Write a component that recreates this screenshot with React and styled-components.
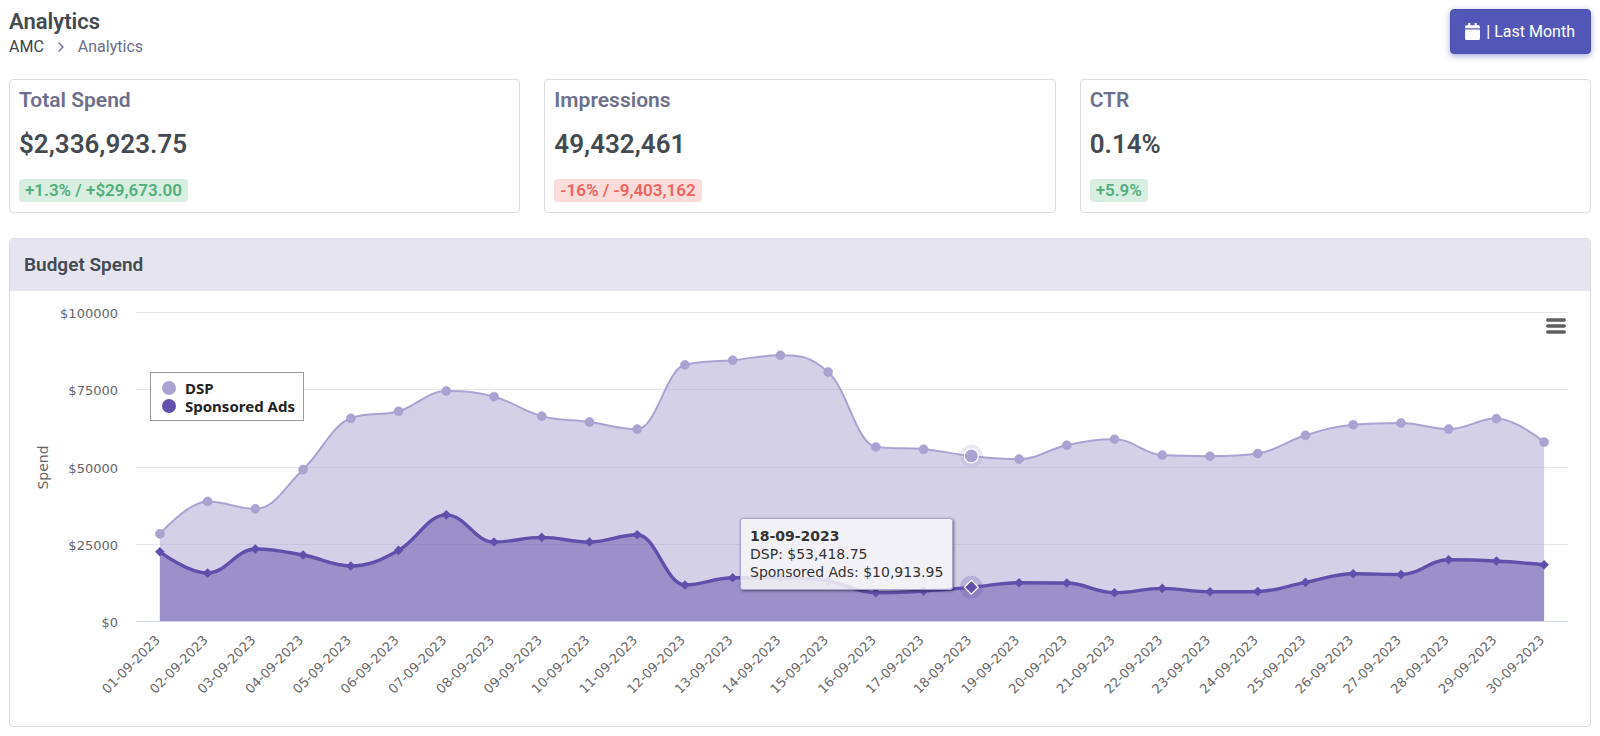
import { useLayoutEffect, useRef, useState } from "react";
import styled, { createGlobalStyle } from "styled-components";
import { ChevronRight } from "lucide-react";
import { FaCalendar } from "react-icons/fa";

const stats = [
  { title: "Total Spend", value: "$2,336,923.75", change: "+1.3% / +$29,673.00", up: true },
  { title: "Impressions", value: "49,432,461", change: "-16% / -9,403,162", up: false },
  { title: "CTR", value: "0.14%", change: "+5.9%", up: true },
];

const dsp = [
  28200, 38700, 36300, 49000, 65600, 67900, 74450, 72600, 66300, 64400,
  62100, 82900, 84400, 86000, 80600, 56350, 55600, 53418.75, 52400, 56900,
  58850, 53700, 53350, 54200, 60100, 63550, 64100, 62100, 65500, 57900,
];

const sponsored = [
  22400, 15500, 23300, 21350, 17800, 22850, 34350, 25550, 27050, 25550,
  27900, 11650, 14000, 14000, 12950, 9150, 9700, 10913.95, 12400, 12300,
  9150, 10550, 9450, 9550, 12500, 15300, 15050, 19800, 19400, 18200,
];

const days = dsp.map((_, i) => `${String(i + 1).padStart(2, "0")}-09-2023`);
const ticks = [0, 25000, 50000, 75000, 100000];
const hovered = 17;

const DSP_COLOR = "#aaa2d1";
const ADS_COLOR = "#6150ab";

const CHART_HEIGHT = 435;
const plot = { left: 126, right: 22, top: 21, bottom: 330 };

const money = (n) =>
  `$${n.toLocaleString("en-US", { minimumFractionDigits: 2 })}`;

const yOf = (value) =>
  plot.bottom - (value / 100000) * (plot.bottom - plot.top);

// Spline through the points, control points flattened at local extremes
function spline(points) {
  const s = 1.5;
  let d = `M ${points[0].x} ${points[0].y}`;
  let prevRight = null;
  for (let i = 1; i < points.length; i++) {
    const last = points[i - 1];
    const p = points[i];
    const next = points[i + 1];
    let left = { x: p.x, y: p.y };
    let right = null;
    if (next) {
      left = { x: (s * p.x + last.x) / (s + 1), y: (s * p.y + last.y) / (s + 1) };
      right = { x: (s * p.x + next.x) / (s + 1), y: (s * p.y + next.y) / (s + 1) };
      const correction =
        ((right.y - left.y) * (right.x - p.x)) / (right.x - left.x) + p.y - right.y;
      left.y += correction;
      right.y += correction;
      if (left.y > last.y && left.y > p.y) {
        left.y = Math.max(last.y, p.y);
        right.y = 2 * p.y - left.y;
      } else if (left.y < last.y && left.y < p.y) {
        left.y = Math.min(last.y, p.y);
        right.y = 2 * p.y - left.y;
      }
      if (right.y > next.y && right.y > p.y) {
        right.y = Math.max(next.y, p.y);
        left.y = 2 * p.y - right.y;
      } else if (right.y < next.y && right.y < p.y) {
        right.y = Math.min(next.y, p.y);
        left.y = 2 * p.y - right.y;
      }
    }
    const c1 = prevRight || last;
    d += ` C ${c1.x} ${c1.y} ${left.x} ${left.y} ${p.x} ${p.y}`;
    prevRight = right;
  }
  return d;
}

const diamond = (x, y, r) =>
  `M ${x} ${y - r} L ${x + r} ${y} L ${x} ${y + r} L ${x - r} ${y} Z`;

function Series({ points, color, width, children }) {
  const line = spline(points);
  const first = points[0];
  const last = points[points.length - 1];
  return (
    <g>
      <path
        d={`${line} L ${last.x} ${plot.bottom} L ${first.x} ${plot.bottom} Z`}
        fill={color}
        fillOpacity="0.5"
      />
      <path d={line} fill="none" stroke={color} strokeWidth={width} strokeLinejoin="round" />
      {children}
    </g>
  );
}

function BudgetChart() {
  const ref = useRef(null);
  const [width, setWidth] = useState(1200);

  useLayoutEffect(() => {
    const measure = () => setWidth(ref.current.clientWidth);
    measure();
    const observer = new ResizeObserver(measure);
    observer.observe(ref.current);
    return () => observer.disconnect();
  }, []);

  const plotRight = width - plot.right;
  const step = (plotRight - plot.left) / days.length;
  const xOf = (i) => plot.left + step * (i + 0.5);
  const dspPoints = dsp.map((v, i) => ({ x: xOf(i), y: yOf(v) }));
  const adsPoints = sponsored.map((v, i) => ({ x: xOf(i), y: yOf(v) }));
  const dspHover = dspPoints[hovered];
  const adsHover = adsPoints[hovered];

  return (
    <ChartArea ref={ref}>
      <ChartSvg width={width} height={CHART_HEIGHT} role="img" aria-label="Budget Spend">
        {ticks.map((tick) => (
          <g key={tick}>
            <GridLine
              x1={plot.left}
              x2={plotRight}
              y1={Math.round(yOf(tick)) + 0.5}
              y2={Math.round(yOf(tick)) + 0.5}
              $axis={tick === 0}
            />
            <AxisText x={plot.left - 18} y={yOf(tick) + 6} textAnchor="end">
              ${tick}
            </AxisText>
          </g>
        ))}
        <AxisTitle
          transform={`translate(38 ${(plot.top + plot.bottom) / 2 + 1}) rotate(-90)`}
          textAnchor="middle"
        >
          Spend
        </AxisTitle>
        {days.map((day, i) => (
          <AxisText
            key={day}
            transform={`translate(${xOf(i) + 1} ${plot.bottom + 20}) rotate(-45)`}
            textAnchor="end"
          >
            {day}
          </AxisText>
        ))}
        <Series points={dspPoints} color={DSP_COLOR} width={2}>
          {dspPoints.map((p, i) => (
            <circle key={i} cx={p.x} cy={p.y} r="4.5" fill={DSP_COLOR} stroke="#a098cb" strokeWidth="0.5" />
          ))}
        </Series>
        <Series points={adsPoints} color={ADS_COLOR} width={3.4}>
          {adsPoints.map((p, i) => (
            <path key={i} d={diamond(p.x, p.y, 4.8)} fill={ADS_COLOR} />
          ))}
        </Series>
        <circle cx={dspHover.x} cy={dspHover.y} r="11.5" fill={DSP_COLOR} fillOpacity="0.25" />
        <circle cx={dspHover.x} cy={dspHover.y} r="7" fill={DSP_COLOR} stroke="#fff" strokeWidth="1.2" />
        <circle cx={adsHover.x} cy={adsHover.y} r="11.5" fill={ADS_COLOR} fillOpacity="0.25" />
        <path d={diamond(adsHover.x, adsHover.y, 7)} fill={ADS_COLOR} stroke="#fff" strokeWidth="1.2" />
      </ChartSvg>

      <Legend>
        <LegendItem type="button">
          <Dot $color={DSP_COLOR} />
          DSP
        </LegendItem>
        <LegendItem type="button">
          <Dot $color={ADS_COLOR} />
          Sponsored Ads
        </LegendItem>
      </Legend>

      <MenuButton type="button" aria-label="View chart menu">
        <svg width="22" height="18" viewBox="0 0 22 18">
          <path
            d="M 2.7 3 H 19.3 M 2.7 9 H 19.3 M 2.7 15 H 19.3"
            stroke="#5f5f61"
            strokeWidth="3.4"
            strokeLinecap="round"
          />
        </svg>
      </MenuButton>

      <Tooltip style={{ right: width - adsHover.x + 18, top: adsHover.y - 69 }}>
        <strong>{days[hovered]}</strong>
        <span>DSP: {money(dsp[hovered])}</span>
        <span>Sponsored Ads: {money(sponsored[hovered])}</span>
      </Tooltip>
    </ChartArea>
  );
}

export default function App() {
  return (
    <Page>
      <GlobalStyle />
      <PageHeader>
        <div>
          <PageTitle>Analytics</PageTitle>
          <Breadcrumb aria-label="Breadcrumb">
            <CrumbLink href="#amc">AMC</CrumbLink>
            <ChevronRight size={16} />
            <span>Analytics</span>
          </Breadcrumb>
        </div>
        <RangeButton type="button">
          <FaCalendar size={17} />
          <span>| Last Month</span>
        </RangeButton>
      </PageHeader>

      <StatGrid>
        {stats.map((stat) => (
          <StatCard key={stat.title}>
            <StatTitle>{stat.title}</StatTitle>
            <StatValue>{stat.value}</StatValue>
            <Badge $up={stat.up}>{stat.change}</Badge>
          </StatCard>
        ))}
      </StatGrid>

      <Panel>
        <PanelTitle>Budget Spend</PanelTitle>
        <BudgetChart />
      </Panel>
    </Page>
  );
}

const GlobalStyle = createGlobalStyle`
  * {
    box-sizing: border-box;
  }

  body {
    margin: 0;
    background: #fff;
    color: #434a51;
    font-family: Roboto, "Liberation Sans", sans-serif;
  }

  button {
    font-family: inherit;
    cursor: pointer;
  }
`;

const Page = styled.main`
  padding: 9px;
`;

const PageHeader = styled.header`
  display: flex;
  justify-content: space-between;
  align-items: flex-start;
  margin-bottom: 20px;
`;

const PageTitle = styled.h1`
  margin: 0;
  font-size: 22px;
  font-weight: 600;
  line-height: 26px;
`;

const Breadcrumb = styled.nav`
  display: flex;
  align-items: center;
  gap: 9px;
  font-size: 16px;
  line-height: 24px;
  color: #6d708b;
`;

const CrumbLink = styled.a`
  color: #3d4349;
  text-decoration: none;
`;

const RangeButton = styled.button`
  display: flex;
  align-items: center;
  gap: 5px;
  height: 45px;
  padding: 0 15px 0 13px;
  border: 1px solid #4b50b3;
  border-radius: 4px;
  background: #5257b7;
  box-shadow: 0 2px 6px rgba(81, 86, 190, 0.5);
  color: #fff;
  font-size: 16px;
`;

const StatGrid = styled.section`
  display: grid;
  grid-template-columns: repeat(3, 1fr);
  gap: 24px;
  margin-bottom: 25px;
`;

const StatCard = styled.article`
  display: flex;
  flex-direction: column;
  align-items: flex-start;
  padding: 8px 9px 10px;
  border: 1px solid #dcdde1;
  border-radius: 4px;
`;

const StatTitle = styled.h2`
  margin: 0 0 16px;
  font-size: 21px;
  font-weight: 600;
  line-height: 24px;
  color: #6d708b;
`;

const StatValue = styled.div`
  margin-bottom: 19px;
  font-size: 26px;
  font-weight: 600;
  line-height: 32px;
`;

const Badge = styled.span`
  padding: 0 6px;
  border-radius: 4px;
  font-size: 17px;
  font-weight: 600;
  line-height: 23px;
  color: ${({ $up }) => ($up ? "#52ae7c" : "#f1635d")};
  background: ${({ $up }) => ($up ? "#d8eee1" : "#fbdcda")};
`;

const Panel = styled.section`
  border: 1px solid #dcdde1;
  border-radius: 4px;
`;

const PanelTitle = styled.h2`
  margin: 0;
  padding: 15px 14px;
  background: #e6e5ef;
  font-size: 19px;
  font-weight: 600;
  line-height: 22px;
`;

const ChartArea = styled.div`
  position: relative;
  font-family: "DejaVu Sans", sans-serif;
`;

const ChartSvg = styled.svg`
  display: block;
`;

const GridLine = styled.line`
  stroke: ${({ $axis }) => ($axis ? "#ccd6eb" : "#e6e6e8")};
  stroke-width: 1;
`;

const AxisText = styled.text`
  font-size: 13px;
  fill: #666;
`;

const AxisTitle = styled.text`
  font-size: 14px;
  fill: #666;
`;

const Legend = styled.div`
  position: absolute;
  top: 81px;
  left: 140px;
  display: flex;
  flex-direction: column;
  padding: 6px 8px 5px 11px;
  border: 1px solid #999;
  background: #fff;
  font-family: "Noto Sans", sans-serif;
`;

const LegendItem = styled.button`
  display: flex;
  align-items: center;
  gap: 9px;
  padding: 0;
  border: 0;
  background: none;
  color: #222;
  font-size: 15px;
  font-weight: 700;
  line-height: 18px;
`;

const Dot = styled.span`
  width: 14px;
  height: 14px;
  border-radius: 50%;
  background: ${({ $color }) => $color};
`;

const MenuButton = styled.button`
  position: absolute;
  top: 26px;
  right: 23px;
  padding: 0;
  border: 0;
  background: none;

  svg {
    display: block;
  }
`;

const Tooltip = styled.div`
  position: absolute;
  display: flex;
  flex-direction: column;
  padding: 8px 9px;
  border: 1px solid #aaa2d1;
  border-radius: 3px;
  background: rgba(247, 247, 247, 0.85);
  box-shadow: 1px 1px 3px rgba(0, 0, 0, 0.5);
  color: #333;
  font-size: 14px;
  line-height: 18px;
  white-space: nowrap;
`;
